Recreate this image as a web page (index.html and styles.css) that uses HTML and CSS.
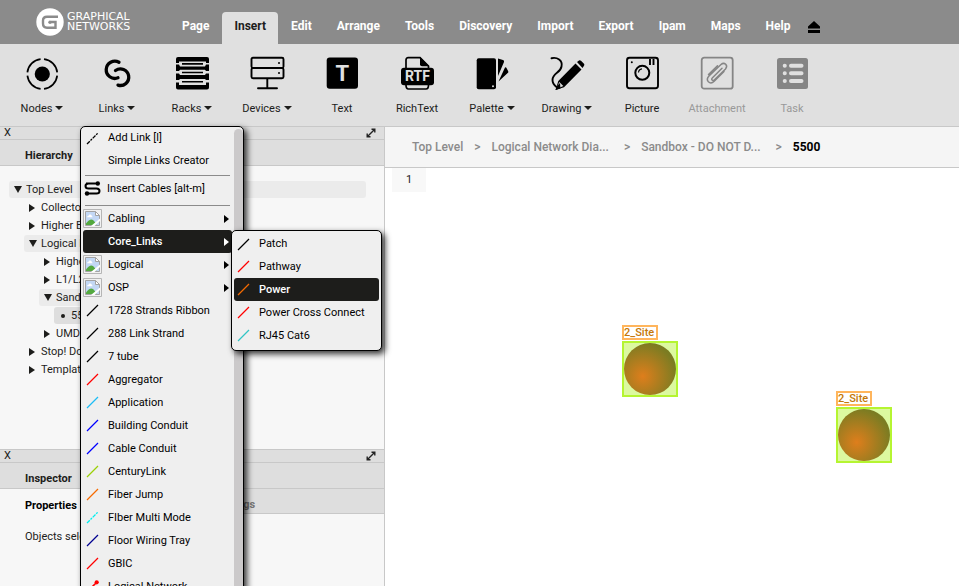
FILE: index.html
```html
<!DOCTYPE html>
<html lang="en">
<head>
<meta charset="utf-8">
<meta name="viewport" content="width=device-width, initial-scale=1">
<title>Graphical Networks</title>
<link rel="stylesheet" href="styles.css">
</head>
<body>
<svg class="defs" aria-hidden="true">
  <symbol id="line" viewBox="0 0 13 13"><path d="M1 12 12 1" fill="none" stroke="currentColor" stroke-width="1.3"/></symbol>
  <symbol id="line-dash" viewBox="0 0 13 13"><path d="M1 12 12 1" fill="none" stroke="currentColor" stroke-width="1.3" stroke-dasharray="4 1 2 1"/></symbol>
  <symbol id="line-dot" viewBox="0 0 13 13"><path d="M1 12 10 3" fill="none" stroke="currentColor" stroke-width="1.6"/><circle cx="10.7" cy="2.3" r="2.1" fill="currentColor"/></symbol>
  <symbol id="image" viewBox="0 0 19 19">
    <path d="M.5.5h18v18H.5z" fill="#f1f1f1" stroke="#b5b5b5"/>
    <path d="M2.5 2.5h10l4 4v10h-14z" fill="#c3d8f5" stroke="#a3a3a3"/>
    <path d="M4 8.300q0-1.500 1.500-1.500.5-1.800 2-1.300 1.500.3 1.300 1.800 1 .2.7 1z" fill="#fff"/>
    <path d="M3 16v-1.500q4-5.500 7-3.500 2 1.500 3.500 5z" fill="#53a93f"/>
    <path d="M12.500 2.500v4h4z" fill="#fff" stroke="#a3a3a3"/>
    <path d="M8 17 17 9.500v2.500l-5.500 5z" fill="#fff"/>
  </symbol>
  <symbol id="expand" viewBox="0 0 10 10"><path d="M1.500 8.500l7-7M5.500 1.200h3.300v3.300M1.200 5.500v3.300h3.300" fill="none" stroke="#222" stroke-width="1.400"/></symbol>
</svg>

<header class="topbar">
  <a class="logo" href="#" aria-label="Graphical Networks">
    <svg width="28" height="28" viewBox="0 0 28 28" aria-hidden="true">
      <circle cx="14" cy="14" r="13.700" fill="#fff"/>
      <path d="M22 8.800H11Q7 8.800 7 12.500v3Q7 19.700 11 19.700h8.500v-5.700H15" fill="none" stroke="#8b8b8b" stroke-width="2.400"/>
      <circle cx="14" cy="14.200" r="1.700" fill="#8b8b8b"/>
    </svg>
    <span class="logo-name">GRAPHICAL<br>NETWORKS</span>
  </a>
  <nav class="tabs" aria-label="Main">
    <a href="#">Page</a><a href="#" class="active" aria-current="page">Insert</a><a href="#">Edit</a><a href="#">Arrange</a><a href="#">Tools</a><a href="#">Discovery</a><a href="#">Import</a><a href="#">Export</a><a href="#">Ipam</a><a href="#">Maps</a><a href="#">Help</a>
  </nav>
  <button class="eject" type="button" aria-label="Collapse toolbar"><svg width="12" height="12" viewBox="0 0 12 12"><path d="M6 0l6 5.500v2H0v-2zM0 9h12v3H0z"/></svg></button>
</header>

<div class="toolbar">
  <button class="tool" type="button"><svg viewBox="0 0 36 36"><circle cx="18.300" cy="18" r="7.600"/><g fill="none" stroke="currentColor" stroke-width="1.700"><path d="M20 3.100A15 15 0 0 1 33.200 16.300M33.200 19.700A15 15 0 0 1 20 32.900M16.600 32.900A15 15 0 0 1 3.400 19.700M3.400 16.300A15 15 0 0 1 16.600 3.100"/></g></svg><span class="drop">Nodes</span></button>
  <button class="tool" type="button"><svg viewBox="0 0 36 36"><path d="M20 6.300A8.600 8.600 0 1 0 19 21.800M16.500 14.500A8.300 8.300 0 1 1 19 29.100" fill="none" stroke="currentColor" stroke-width="3.300" stroke-linecap="round"/></svg><span class="drop">Links</span></button>
  <button class="tool" type="button"><svg viewBox="0 0 36 36"><path d="M4 1h29q2 0 2 2v4h-3V5.500H5V7H2V3q0-2 2-2zM2 8.500h3l1 2h25l1-2h3v6.500h-3l-1-1.200H6L5 15H2zM2 17.500h3l1 1.500h25l1-1.500h3v6.500h-3l-1-1H6l-1 1H2zM2 26.500h3v2.500h27v-2.500h3v5q0 2-2 2H4q-2 0-2-2z"/><path d="M8 7.900h21M8 16.500h21M8 25.800h21" stroke="currentColor" stroke-width="1.600"/></svg><span class="drop">Racks</span></button>
  <button class="tool" type="button"><svg viewBox="0 0 36 36"><path d="M4 1.700h29q1.500 0 1.500 1.500v7.300q0 1.500-1.500 1.500H4q-1.500 0-1.500-1.500V3.200q0-1.500 1.500-1.500zM4 12h29q1.500 0 1.500 1.500v7.300q0 1.500-1.500 1.500H4q-1.500 0-1.500-1.500v-7.300Q2.500 12 4 12zM18.300 22.500V32.300M9 32.300h19" fill="none" stroke="currentColor" stroke-width="1.900" stroke-linecap="round"/><circle cx="30" cy="7" r="1"/><circle cx="30" cy="17" r="1"/></svg><span class="drop">Devices</span></button>
  <button class="tool" type="button"><svg viewBox="0 0 36 36"><rect x="2.700" y="1.500" width="31.300" height="31.300" rx="3"/><text x="18.300" y="25" class="glyph-t">T</text></svg><span>Text</span></button>
  <button class="tool" type="button"><svg viewBox="0 0 36 36"><path d="M7 13V4q0-2.300 2.300-2.300H21l8.500 8.500V29q0 4-2.500 4H9.500Q7 33 7 29z" fill="none" stroke="currentColor" stroke-width="1.700"/><path d="M21 1l9.300 9.300H23q-2 0-2-2z"/><rect x="2" y="11.700" width="33" height="17.600" rx="3"/><text x="18.500" y="25.300" class="glyph-rtf">RTF</text></svg><span>RichText</span></button>
  <button class="tool" type="button"><svg viewBox="0 0 36 36"><rect x="2.700" y="2.300" width="19.300" height="31" rx="2"/><circle cx="19" cy="30.300" r="1" fill="#e0e0e0"/><path d="M24 2.500l5 1.500q1.500.5 1 2L24 20zM31 11.500q1-.5 1.500.5l1.700 3.200q.6 1-.5 1.900L24.500 25.500z"/></svg><span class="drop">Palette</span></button>
  <button class="tool" type="button"><svg viewBox="0 0 36 36"><path d="M2.500 2.200C8 1 14 4 12.500 10.500 11.500 17 3.500 17 3.500 24q0 4 4 7" fill="none" stroke="currentColor" stroke-width="1.900" stroke-linecap="round"/><path d="M26.500 7.500l6 6L15 31.200 6.500 34 9.300 25zM28 6l2-1.500q1-.5 2 .3l3 3q.8 1 0 2L33.500 12z"/><path d="M10.300 26l4 4-4.500 2-1.500-1.500z" fill="#e0e0e0"/><path d="M8 30l3-3 .5 5.500-5 1.500z"/></svg><span class="drop">Drawing</span></button>
  <button class="tool" type="button"><svg viewBox="0 0 36 36"><g fill="none" stroke="currentColor" stroke-width="1.900"><rect x="3" y="1.800" width="31" height="30.400" rx="2.500"/><circle cx="18.300" cy="16.800" r="7" stroke-width="2"/><path d="M26 3v6M29.500 3v6"/><path d="M14.500 16.500q.3-3.300 3.500-3.600" stroke-width="1.200"/></g><circle cx="7.800" cy="6.300" r="1"/></svg><span>Picture</span></button>
  <button class="tool" type="button" disabled><svg viewBox="0 0 36 36"><g fill="none" stroke="currentColor" stroke-width="1.800"><rect x="2.700" y="1.700" width="31" height="31" rx="2.500"/><path d="M23 12.200l-9.500 9.500q-1.500 1.500-.2 2.500 1 .8 2.200-.5L26.500 13q2.200-2.800.2-4.700-2.200-2-4.700.2L10 20q-3 3.200-.6 5.800 2.600 2.500 5.800-.5l9.800-9.800M18.500 9.800 9.500 18.500" stroke-width="1.500" stroke-linecap="round"/></g></svg><span>Attachment</span></button>
  <button class="tool" type="button" disabled><svg viewBox="0 0 36 36"><rect x="3" y="2" width="31" height="31" rx="2.500"/><g stroke="#e0e0e0" stroke-width="4" stroke-linecap="round"><path d="M17 9.700h10.500M17 17.300h10.500M17 25h10.500M10.700 9.700h.1M10.700 17.300h.1M10.700 25h.1"/></g></svg><span>Task</span></button>
</div>

<main class="workspace">
  <aside class="side">
    <section class="panel hierarchy">
      <div class="grip"><button type="button" aria-label="Close Hierarchy">X</button><button type="button" aria-label="Expand Hierarchy"><svg width="10" height="10"><use href="#expand"/></svg></button></div>
      <h2>Hierarchy</h2>
      <ul class="tree">
        <li><span class="row open">Top Level</span>
          <ul>
            <li><span class="row">Collectors</span></li>
            <li><span class="row">Higher Ed</span></li>
            <li><span class="row open">Logical Network</span>
              <ul>
                <li><span class="row">Higher Ed</span></li>
                <li><span class="row">L1/L2</span></li>
                <li><span class="row open">Sandbox</span>
                  <ul><li><span class="row leaf">5500</span></li></ul>
                </li>
                <li><span class="row">UMD</span></li>
              </ul>
            </li>
            <li><span class="row">Stop! Do Not</span></li>
            <li><span class="row">Templates</span></li>
          </ul>
        </li>
      </ul>
    </section>
    <section class="panel inspector">
      <div class="grip"><button type="button" aria-label="Close Inspector">X</button><button type="button" aria-label="Expand Inspector"><svg width="10" height="10"><use href="#expand"/></svg></button></div>
      <h2>Inspector</h2>
      <div class="subtabs"><button type="button" class="current">Properties</button><button type="button">Settings</button></div>
      <p>Objects selected</p>
    </section>
  </aside>

  <section class="stage">
    <nav class="crumbs" aria-label="Breadcrumb"><a href="#">Top Level</a><i>&gt;</i><a href="#" class="clipped">Logical Network Dia...</a><i>&gt;</i><a href="#" class="clipped">Sandbox - DO NOT D...</a><i>&gt;</i><b>5500</b></nav>
    <div class="canvas">
      <button class="page-tab" type="button">1</button>
      <div class="node node-a"><span>2_Site</span><div class="body"></div></div>
      <div class="node node-b"><span>2_Site</span><div class="body"></div></div>
    </div>
  </section>
</main>

<div class="menu links-menu">
  <button type="button" class="item"><svg class="ic"><use href="#line-dash"/></svg>Add Link [l]</button>
  <button type="button" class="item"><span class="ic"></span>Simple Links Creator</button>
  <hr>
  <button type="button" class="item"><svg class="cable" viewBox="0 0 17 15"><path d="M2 2.500H12M15 2.500H4.500Q1.500 2.500 1.500 5t3 2.500h8q3 0 3 2.500t-3 2.500H2" fill="none" stroke="currentColor" stroke-width="2"/><circle cx="13.800" cy="2.500" r="2.200"/><circle cx="3" cy="12.500" r="2.200"/></svg>Insert Cables [alt-m]</button>
  <hr>
  <button type="button" class="item sub"><svg class="pic"><use href="#image"/></svg>Cabling</button>
  <button type="button" class="item sub selected"><span class="ic"></span>Core_Links</button>
  <button type="button" class="item sub"><svg class="pic"><use href="#image"/></svg>Logical</button>
  <button type="button" class="item sub"><svg class="pic"><use href="#image"/></svg>OSP</button>
  <button type="button" class="item"><svg class="ic"><use href="#line"/></svg>1728 Strands Ribbon</button>
  <button type="button" class="item"><svg class="ic"><use href="#line"/></svg>288 Link Strand</button>
  <button type="button" class="item"><svg class="ic"><use href="#line"/></svg>7 tube</button>
  <button type="button" class="item"><svg class="ic red"><use href="#line"/></svg>Aggregator</button>
  <button type="button" class="item"><svg class="ic sky"><use href="#line"/></svg>Application</button>
  <button type="button" class="item"><svg class="ic blue"><use href="#line"/></svg>Building Conduit</button>
  <button type="button" class="item"><svg class="ic blue"><use href="#line"/></svg>Cable Conduit</button>
  <button type="button" class="item"><svg class="ic lime"><use href="#line"/></svg>CenturyLink</button>
  <button type="button" class="item"><svg class="ic orange"><use href="#line"/></svg>Fiber Jump</button>
  <button type="button" class="item"><svg class="ic cyan"><use href="#line-dash"/></svg>FIber Multi Mode</button>
  <button type="button" class="item"><svg class="ic navy"><use href="#line"/></svg>Floor Wiring Tray</button>
  <button type="button" class="item"><svg class="ic red"><use href="#line"/></svg>GBIC</button>
  <button type="button" class="item"><svg class="ic red"><use href="#line-dot"/></svg>Logical Network</button>
</div>

<div class="menu core-menu">
  <button type="button" class="item"><svg class="ic"><use href="#line"/></svg>Patch</button>
  <button type="button" class="item"><svg class="ic red"><use href="#line"/></svg>Pathway</button>
  <button type="button" class="item selected"><svg class="ic orange"><use href="#line"/></svg>Power</button>
  <button type="button" class="item"><svg class="ic red"><use href="#line"/></svg>Power Cross Connect</button>
  <button type="button" class="item"><svg class="ic teal"><use href="#line"/></svg>RJ45 Cat6</button>
</div>
</body>
</html>
```
FILE: styles.css
```css
*, *::before, *::after { box-sizing: border-box; }
html, body { height: 100%; }
body {
  margin: 0;
  display: flex;
  flex-direction: column;
  overflow: hidden;
  position: relative;
  font: 11px/16px Roboto, "Liberation Sans", sans-serif;
  color: #1d1d1b;
  background: #fff;
}
button { font: inherit; color: inherit; border: 0; padding: 0; background: none; }
a { color: inherit; text-decoration: none; }
h2, p, ul { margin: 0; padding: 0; }
ul { list-style: none; }
.defs { position: absolute; width: 0; height: 0; }

/* Top bar */
.topbar {
  height: 44px;
  flex: none;
  display: flex;
  align-items: flex-end;
  background: #8b8b8b;
  color: #fff;
}
.logo { width: 170px; height: 44px; padding-left: 36px; display: flex; align-items: center; gap: 3px; }
.logo-name { font: 11px/10px "DejaVu Sans", sans-serif; }
.tabs { display: flex; gap: 1px; height: 32px; }
.tabs a { padding: 0 12px; font-size: 12px; font-weight: 700; line-height: 28px; border-radius: 4px 4px 0 0; }
.tabs .active { background: #e0e0e0; color: #1d1d1b; }
.eject { height: 23px; margin-left: 6px; display: flex; color: #000; }

/* Toolbar */
.toolbar {
  height: 83px;
  flex: none;
  display: flex;
  padding-left: 4px;
  background: #e0e0e0;
  border-bottom: 1px solid #c8c8c8;
}
.tool { width: 75px; padding-top: 12px; display: flex; flex-direction: column; align-items: center; gap: 9px; }
.tool svg { width: 36px; height: 36px; color: #000; fill: currentColor; }
.tool span { padding-left: 1px; }
.tool:disabled { color: #999; }
.tool:disabled svg { color: #858585; }
.drop::after {
  content: "";
  display: inline-block;
  margin-left: 3px;
  vertical-align: 2px;
  border: 4px solid transparent;
  border-top-color: #1d1d1b;
  border-bottom: 0;
}
svg .glyph-t, svg .glyph-rtf { fill: #e0e0e0; font-weight: 700; text-anchor: middle; }
.glyph-t { font-size: 22px; }
.glyph-rtf { font-size: 14px; }

/* Side panels */
.workspace { flex: 1; min-height: 0; display: flex; }
.side { width: 385px; flex: none; display: flex; flex-direction: column; background: #f7f7f7; border-right: 1px solid #c8c8c8; }
.hierarchy { height: 323px; flex: none; border-bottom: 1px solid #c8c8c8; }
.grip { height: 13px; padding: 0 8px 0 4px; display: flex; align-items: center; justify-content: space-between; background: #dedede; border-bottom: 1px solid #c8c8c8; }
.grip svg { display: block; }
.panel h2 { height: 26px; padding-left: 25px; font-size: 11px; line-height: 32px; background: #dedede; border-bottom: 1px solid #c8c8c8; }
.tree { padding: 15px 18px 0 9px; }
.tree ul { padding-left: 15px; }
.row { display: flex; align-items: center; height: 17px; margin-bottom: 1px; padding-left: 5px; border-radius: 3px; }
.row::before { content: ""; width: 6px; margin: 0 6px 0 0; border: 4px solid transparent; border-left: 6px solid #1d1d1b; border-right: 0; }
.row.open { background: #ebebeb; }
.row.open::before { width: 8px; margin-right: 4px; border: 4px solid transparent; border-top: 7px solid #1d1d1b; border-bottom: 0; }
.row.leaf { padding-left: 7px; background: #dedede; }
.row.leaf::before { width: 4px; height: 4px; margin-right: 6px; border: 0; border-radius: 50%; background: #1d1d1b; }
.subtabs { height: 25px; display: flex; background: #dedede; border-bottom: 1px solid #c8c8c8; font-weight: 700; color: #777; }
.subtabs button { padding: 8px 5px 0 0; }
.subtabs .current { width: 160px; height: 25px; padding-left: 25px; text-align: left; color: #000; background: #f7f7f7; }
.subtabs button + button { margin-left: 54px; }
.inspector p { padding: 15px 25px; }

/* Stage */
.stage { flex: 1; min-width: 0; display: flex; flex-direction: column; }
.crumbs { height: 41px; flex: none; display: flex; align-items: center; gap: 11px; padding-left: 27px; background: #f5f5f5; border-bottom: 1px solid #c8c8c8; font-size: 12px; font-weight: 500; color: #8b8b8b; }
.crumbs i { font-style: normal; }
.crumbs .clipped { padding-right: 4px; }
.crumbs b { color: #000; }
.canvas { flex: 1; position: relative; padding-left: 7px; }
.page-tab { display: block; width: 34px; height: 24px; background: #f8f8f8; }
.node { position: absolute; width: 56px; }
.node-a { left: 237px; top: 157px; }
.node-b { left: 451px; top: 223px; }
.node span { display: block; width: 36px; height: 15px; border: 2px solid #ffb55c; font-size: 11px; font-weight: 500; line-height: 11px; color: #c47808; }
.node .body { height: 56px; margin-top: 1px; border: 2px solid #b5f531; background: #dcf9a0; }
.node .body::before { content: ""; display: block; height: 52px; border-radius: 50%; background: radial-gradient(circle at 36% 64%, #de7e1c, #7b7c22 72%); }

/* Menus */
.menu { position: absolute; background: #efefef; border: 1px solid #000; border-radius: 5px; box-shadow: 3px 3px 6px rgba(0, 0, 0, .8); }
.links-menu { left: 80px; top: 126px; width: 164px; height: 480px; padding: 0 11px 0 2px; overflow: hidden; }
.links-menu::after { content: ""; position: absolute; right: 0; top: 2px; bottom: 0; width: 9px; border-radius: 5px 5px 0 0; background: #cbc9ca; }
.core-menu { left: 231px; top: 230px; width: 151px; padding: 2px 2px 3px; }
.item { width: 100%; height: 23px; padding-left: 3px; display: flex; align-items: center; text-align: left; color: #000; border-radius: 3px; }
.item:first-child { height: 22px; }
.item .ic { width: 13px; height: 13px; margin-right: 9px; flex: none; }
.item .pic { width: 19px; height: 19px; margin: 0 6px 0 -3px; flex: none; }
.item .cable { width: 17px; height: 15px; margin: 0 6px 0 -2px; flex: none; }
.sub::after { content: ""; margin: 0 3px 0 auto; border: 4px solid transparent; border-left: 5px solid currentColor; border-right: 0; }
.item.selected { background: #1d1d1b; color: #fff; font-weight: 500; }
.menu hr { height: 1px; margin: 3px 2px 1px; border: 0; background: #8b8b8b; }
.menu hr ~ hr { margin-top: 5px; }
.red { color: #f00; }
.sky { color: #1cbcf5; }
.blue { color: #00f; }
.lime { color: #9bd007; }
.orange { color: #f66a00; }
.cyan { color: #0ee; }
.navy { color: #000090; }
.teal { color: #32c5c5; }
```
